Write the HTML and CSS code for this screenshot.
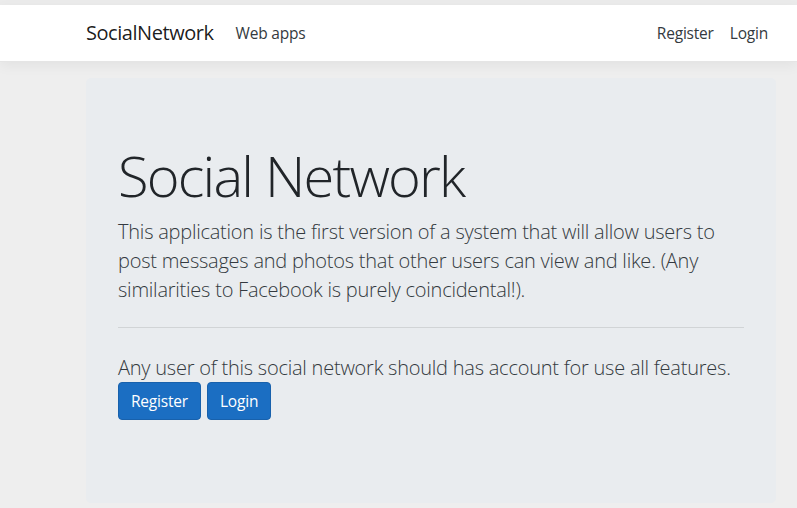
FILE: index.html
```html
<!DOCTYPE html>
<html lang="en">
<head>
<meta charset="utf-8">
<title>SocialNetwork</title>
<link rel="stylesheet" href="styles.css">
</head>
<body>
<header class="topbar">
  <nav class="navbar">
    <div class="container nav-inner">
      <a class="brand" href="#">SocialNetwork</a>
      <ul class="nav-list">
        <li><a class="nav-link" href="#">Web apps</a></li>
      </ul>
      <ul class="nav-list nav-right">
        <li><a class="nav-link" href="#">Register</a></li>
        <li><a class="nav-link" href="#">Login</a></li>
      </ul>
    </div>
  </nav>
</header>
<main class="container">
  <section class="jumbotron">
    <h1 class="display">Social Network</h1>
    <p class="lead">This application is the first version of a system that will allow users to post messages and photos that other users can view and like. (Any similarities to Facebook is purely coincidental!).</p>
    <hr class="divider">
    <p class="lead lead-tight">Any user of this social network should has account for use all features.</p>
    <p class="actions">
      <a class="btn" href="#">Register</a>
      <a class="btn" href="#">Login</a>
    </p>
  </section>
</main>
</body>
</html>
```

FILE: styles.css
```css
* { box-sizing: border-box; }
html, body { margin: 0; padding: 0; }
body {
  color: #212529;
  font-family: "Open Sans", "Noto Sans", sans-serif;
  font-size: 16px;
  line-height: 1.5;
  padding-top: 5px;
  background: linear-gradient(#ebebeb, #ebebeb) top / 100% 5px no-repeat, #eeeeee;
}
a { text-decoration: none; }
.container {
  width: 720px;
  margin-left: 71px;
  padding: 0 15px;
}
.topbar {
  background: #fff;
  border-bottom: 1px solid #e5e5e5;
  box-shadow: 0 4px 12px rgba(0,0,0,.05);
  margin-bottom: 16px;
}
.navbar { padding: 8px 0; }
.nav-inner {
  display: flex;
  align-items: center;
}
.brand {
  font-size: 20px;
  line-height: 30px;
  padding: 5px 0;
  margin-right: 14px;
  color: rgba(0,0,0,.9);
  letter-spacing: -0.45px;
}
.nav-list {
  list-style: none;
  margin: 0;
  padding: 0;
  display: flex;
}
.nav-right { margin-left: auto; }
.nav-link {
  display: block;
  padding: 9px 8px 7px;
  color: #343a40;
  font-size: 15.5px;
  letter-spacing: -0.2px;
}
.jumbotron {
  background: #e9ecef;
  border-radius: 5px;
  padding: 64px 32px 64px;
}
.display {
  font-size: 56px;
  font-weight: 300;
  line-height: 1.2;
  margin: 0 0 8px;
  letter-spacing: -1.8px;
}
.lead {
  font-size: 20px;
  font-weight: 300;
  line-height: 29px;
  margin: 0 0 23px;
  color: #343a40;
  letter-spacing: -0.23px;
}
.divider {
  border: 0;
  border-top: 1px solid rgba(0,0,0,.1);
  margin: 0 0 26px;
}
.lead-tight {
  margin-bottom: 0;
  line-height: 28px;
}
.actions {
  margin: 0 0 19px;
  display: flex;
  gap: 6px;
}
.btn {
  display: inline-block;
  background: #1b6ec2;
  border: 1px solid #1861ac;
  color: #fff;
  font-size: 15.5px;
  line-height: 24px;
  padding: 6px 12px;
  border-radius: 4px;
  letter-spacing: -0.2px;
}
```
